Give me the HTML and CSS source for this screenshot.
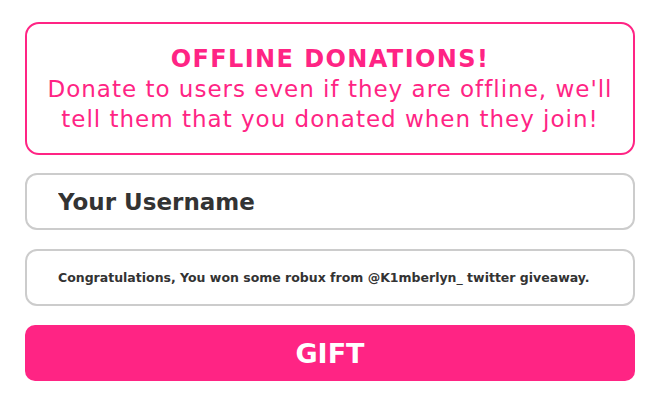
FILE: index.html
```html
<!DOCTYPE html>
<html lang="en">
<head>
    <meta charset="UTF-8">
    <meta name="viewport" content="width=device-width, initial-scale=1.0">
    <title>Offline Donations</title>
    <link rel="stylesheet" href="styles.css">
</head>
<body>
    <div class="container">
        <div class="notice">
            <h1>OFFLINE DONATIONS!</h1>
            <p>Donate to users even if they are offline, we'll tell them that you donated when they join!</p>
        </div>

        <form id="giftForm">
            <input type="text" class="field field-user" id="username" placeholder="Your Username">
            <input type="text" class="field field-message" id="message" value="Congratulations, You won some robux from @K1mberlyn_ twitter giveaway.">
            <button type="submit" class="btn">GIFT</button>
        </form>
    </div>
</body>
</html>
```

FILE: styles.css
```css
:root {
    --pink: #ff2484;
    --textColor: #333333;
    --borderColor: #cccccc;
}

body {
    margin: 0;
    padding: 0;
    background: #ffffff;
    font-family: 'DejaVu Sans', 'Liberation Sans', sans-serif;
}

.container {
    padding: 22px 26px 0 25px;
}

.notice {
    box-sizing: border-box;
    height: 133px;
    padding-top: 20px;
    border: 2px solid var(--pink);
    border-radius: 14px;
    color: var(--pink);
    text-align: center;
}

.notice h1 {
    margin: 0;
    font-size: 24px;
    font-weight: 700;
    letter-spacing: 1.4px;
    line-height: 30px;
}

.notice p {
    margin: 0;
    font-size: 23px;
    letter-spacing: 1px;
    line-height: 30px;
}

#giftForm {
    display: flex;
    flex-direction: column;
}

.field {
    box-sizing: border-box;
    height: 57px;
    margin-top: 18px;
    padding: 0 0 0 31px;
    border: 2px solid var(--borderColor);
    border-radius: 12px;
    background: #ffffff;
    color: var(--textColor);
    font-family: inherit;
    font-weight: 700;
    outline: none;
}

.field-user {
    font-size: 23px;
}

.field-user::placeholder {
    color: var(--textColor);
    opacity: 1;
}

.field-message {
    margin-top: 19px;
    font-size: 12.5px;
}

.btn {
    height: 56px;
    margin-top: 19px;
    border: none;
    border-radius: 10px;
    background: var(--pink);
    color: #ffffff;
    font-family: inherit;
    font-size: 27px;
    font-weight: 700;
    cursor: pointer;
}
```
